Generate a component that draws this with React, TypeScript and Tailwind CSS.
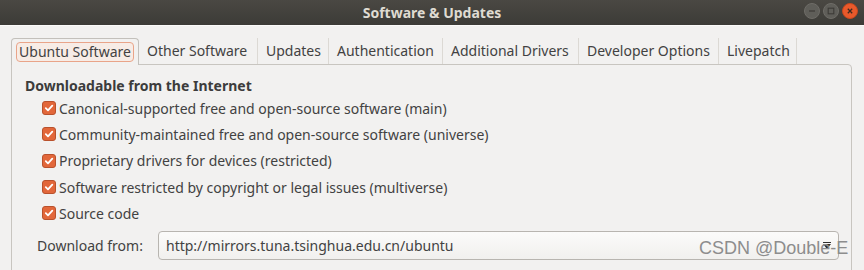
import React from "react";

const tabs = [
  { label: "Ubuntu Software", w: "w-[128px]" },
  { label: "Other Software", w: "w-[119px]" },
  { label: "Updates", w: "w-[71px]" },
  { label: "Authentication", w: "w-[114px]" },
  { label: "Additional Drivers", w: "w-[136px]" },
  { label: "Developer Options", w: "w-[140px]" },
  { label: "Livepatch", w: "w-[78px]" },
];

const options = [
  "Canonical-supported free and open-source software (main)",
  "Community-maintained free and open-source software (universe)",
  "Proprietary drivers for devices (restricted)",
  "Software restricted by copyright or legal issues (multiverse)",
  "Source code",
];

const Check: React.FC = () => (
  <div className="w-[14px] h-[14px] rounded-[3px] bg-[#e2673a] border border-[#b9512c] flex items-center justify-center shrink-0">
    <svg width="10" height="10" viewBox="0 0 10 10">
      <path d="M1.8 5.2 L4 7.4 L8.3 2.6" stroke="#fff" strokeWidth="1.8" fill="none" strokeLinecap="round" strokeLinejoin="round" />
    </svg>
  </div>
);

const WinButton: React.FC<{ kind: "min" | "max" | "close" }> = ({ kind }) => (
  <div
    className={
      kind === "close"
        ? "w-[16px] h-[16px] rounded-full bg-[#e9592b] border border-[#c9481f] flex items-center justify-center"
        : "w-[16px] h-[16px] rounded-full bg-[#5f5e59] border border-[#6e6c67] flex items-center justify-center"
    }
  >
    <svg width="10" height="10" viewBox="0 0 10 10">
      {kind === "min" && <path d="M2 5 H8" stroke="#3c3b37" strokeWidth="1.2" />}
      {kind === "max" && <rect x="2.2" y="2.2" width="5.6" height="5.6" stroke="#3c3b37" strokeWidth="1.1" fill="none" />}
      {kind === "close" && <path d="M2.8 2.8 L7.2 7.2 M7.2 2.8 L2.8 7.2" stroke="#3c2a20" strokeWidth="1.3" />}
    </svg>
  </div>
);

const App: React.FC = () => {
  return (
    <div
      className="relative w-[864px] h-[270px] bg-[#f2f1f0] overflow-hidden text-[#424242]"
      style={{ fontFamily: "'Noto Sans', 'Open Sans', sans-serif" }}
    >
      <div className="h-[25px] bg-gradient-to-b from-[#4a4843] to-[#3c3b37] flex items-center relative">
        <span className="w-full text-center font-bold text-[14px] text-[#dfdbd2]">Software &amp; Updates</span>
        <div className="absolute right-[6px] top-[3px] flex gap-[3px]">
          <WinButton kind="min" />
          <WinButton kind="max" />
          <WinButton kind="close" />
        </div>
      </div>
      <div className="border-t border-[#fbfaf9] pt-[12px] pl-[11px] pr-[12px]">
        <div className="flex h-[26px] items-stretch">
          {tabs.map((t, i) =>
            i === 0 ? (
              <div
                key={t.label}
                className={`${t.w} border border-b-0 border-[#c3c0bb] rounded-t-[4px] bg-[#f2f1f0] flex items-start justify-center pt-[3px] relative z-10 -mb-px`}
              >
                <span className="text-[14px] leading-[18px] px-[2px] rounded-[4px] border border-[#e9a489] bg-[#f7ece6]">
                  {t.label}
                </span>
              </div>
            ) : (
              <div key={t.label} className={`${t.w} border-r border-[#dcd9d4] pl-[8px] flex items-start pt-[4px] whitespace-nowrap`}>
                <span className="text-[14px] leading-[18px]">{t.label}</span>
              </div>
            )
          )}
        </div>
        <div className="h-[220px] border border-[#c8c5c0] rounded-tr-[4px] pl-[13px] pt-[11px]">
          <div className="font-bold text-[14px] leading-[19px] text-[#3c3c3c]">Downloadable from the Internet</div>
          <div className="pl-[17px] flex flex-col">
            {options.map((o) => (
              <div key={o} className="flex items-center gap-[3px] h-[26.3px]">
                <Check />
                <span className="text-[14px]">{o}</span>
              </div>
            ))}
          </div>
          <div className="flex items-center mt-[5px] pl-[12px]">
            <span className="text-[14px] w-[121px]">Download from:</span>
            <div className="relative w-[681px] h-[29px] rounded-[4px] border border-[#b8b5b0] bg-gradient-to-b from-[#fbfbfa] to-[#f1f0ee] flex items-center pl-[7px]">
              <span className="text-[14px]">http://mirrors.tuna.tsinghua.edu.cn/ubuntu</span>
              <svg className="absolute right-[6px] top-[10px]" width="10" height="7" viewBox="0 0 10 7">
                <path d="M1 0.5 H9" stroke="#2e2e2e" strokeWidth="1" />
                <path d="M1 2 H9 L5 7 Z" fill="#2e2e2e" />
              </svg>
            </div>
          </div>
        </div>
      </div>
      <div
        className="absolute left-[699px] top-[235px] text-[18px] text-[#8d8d8d]"
        style={{ fontFamily: "'Liberation Sans', Arial, sans-serif" }}
      >
        CSDN @Double-E
      </div>
    </div>
  );
};

export default App;
